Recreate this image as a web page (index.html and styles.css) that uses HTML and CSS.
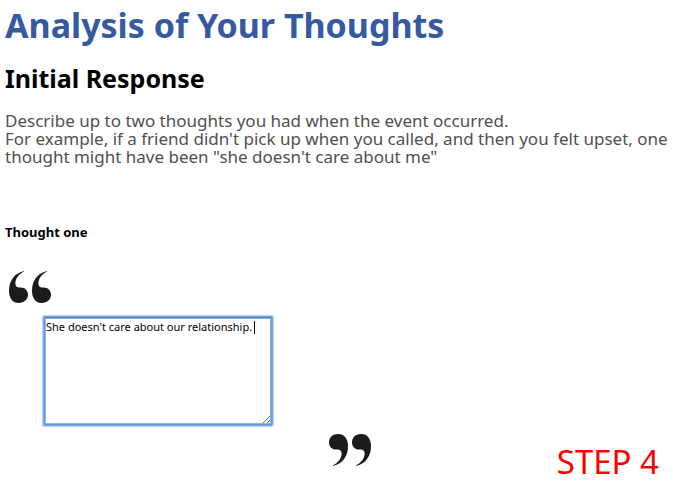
FILE: index.html
```html
<!DOCTYPE html>
<html lang="en">
<head>
<meta charset="utf-8">
<title>Analysis of Your Thoughts</title>
<link rel="stylesheet" href="styles.css">
</head>
<body>
<main class="page">
  <h1 class="title">Analysis of Your Thoughts</h1>
  <h2 class="subtitle">Initial Response</h2>
  <p class="intro">Describe up to two thoughts you had when the event occurred.<br>For example, if a friend didn't pick up when you called, and then you felt upset, one thought might have been "she doesn't care about me"</p>
  <label class="label" for="thought">Thought one</label>
  <div class="quote">
    <svg class="mark" viewBox="0 0 42 32" aria-hidden="true">
      <defs><path id="q" d="M14.8 0C5 2.5 0 10 0 20C0 27.5 3.8 32 9.8 32C15.2 32 19 28.5 19 23.8C19 19 15.5 16.2 11.2 16.4C8.5 16.6 6.4 15.8 6.4 12.2C6.4 7.5 10 3 15 .6Z"/></defs>
      <use href="#q"/><use href="#q" x="23"/>
    </svg>
    <div class="field">
      <textarea class="input" id="thought">She doesn't care about our relationship.</textarea>
      <span class="caret"></span>
    </div>
  </div>
  <div class="footer">
    <svg class="mark" viewBox="0 0 42 32" aria-hidden="true">
      <g transform="rotate(180 21 16)"><use href="#q"/><use href="#q" x="23"/></g>
    </svg>
    <strong class="step">STEP 4</strong>
  </div>
</main>
</body>
</html>
```
FILE: styles.css
```css
* { box-sizing: border-box; }
body {
  margin: 0;
  background: #fff;
  color: #000;
  font-family: "Lucida Grande", "Noto Sans", sans-serif;
}
.page { padding: 3px 5px 0; }
.title {
  margin: 0;
  color: #365a9f;
  font-size: 34px;
  line-height: 44px;
}
.subtitle {
  margin: 14px 0 0;
  font-size: 25px;
  line-height: 34px;
}
.intro {
  margin: 17px 0 0;
  color: #505050;
  font-size: 17px;
  line-height: 18px;
}
.label {
  display: block;
  margin-top: 57px;
  font-size: 13px;
  font-weight: bold;
  line-height: 18px;
}
.quote { margin-top: 30px; padding-left: 4px; }
.mark {
  display: block;
  flex: none;
  width: 42px;
  height: 32px;
  fill: #1b1b1b;
}
.field {
  position: relative;
  width: 228px;
  margin: 14px 0 0 35px;
}
.input {
  display: block;
  width: 100%;
  height: 108px;
  padding: 1px 0;
  border: 1px solid #6a9bd6;
  border-top-color: #4a7fb8;
  border-radius: 1px;
  outline: 0;
  box-shadow: 0 0 0 1px #7eaadf, 0 0 1px 2px #b4cff0, inset 0 0 0 1px #8db5e4;
  background: #fff;
  color: #000;
  font: 11px/16px "Lucida Grande", "Noto Sans", sans-serif;
  text-indent: 1px;
  resize: both;
}
.caret {
  position: absolute;
  top: 4px;
  right: 17px;
  width: 1px;
  height: 13px;
  background: #000;
}
.footer {
  display: flex;
  align-items: flex-start;
  justify-content: space-between;
  margin-top: 9px;
  padding: 0 9px 0 324px;
}
.step {
  color: #f00;
  font-size: 33px;
  font-weight: normal;
  line-height: 40px;
  margin-top: 8px;
}
```
